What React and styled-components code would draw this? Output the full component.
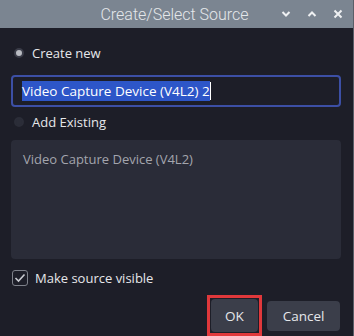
import React from 'react'
import styled, { createGlobalStyle } from 'styled-components'

const Global = createGlobalStyle`
  html, body {
    margin: 0;
    padding: 0;
    background: #1d1e28;
  }
  * { box-sizing: border-box; }
`

const App = () => {
  return (
    <>
      <Global />
      <Window>
        <TitleBar>
          <Title>Create/Select Source</Title>
          <Controls>
            <CtrlButton>
              <svg width="10" height="8" viewBox="0 0 10 8">
                <path d="M1.5 2 L5 5.5 L8.5 2" fill="none" stroke="#eef0f2" strokeWidth="2" />
              </svg>
            </CtrlButton>
            <CtrlButton>
              <svg width="10" height="8" viewBox="0 0 10 8">
                <path d="M1.5 6 L5 2.5 L8.5 6" fill="none" stroke="#eef0f2" strokeWidth="2" />
              </svg>
            </CtrlButton>
            <CtrlButton>
              <svg width="10" height="10" viewBox="0 0 10 10">
                <path d="M1.5 1.5 L8.5 8.5 M8.5 1.5 L1.5 8.5" fill="none" stroke="#eef0f2" strokeWidth="2" />
              </svg>
            </CtrlButton>
          </Controls>
        </TitleBar>
        <Body>
          <RadioRow>
            <Radio checked />
            <Label>Create new</Label>
          </RadioRow>
          <NameInput>
            <Selected>Video Capture Device (V4L2) 2</Selected>
            <Caret />
          </NameInput>
          <RadioRow>
            <Radio />
            <Label>Add Existing</Label>
          </RadioRow>
          <ListBox>
            <ListItem>Video Capture Device (V4L2)</ListItem>
          </ListBox>
          <CheckRow>
            <CheckBox>
              <svg width="12" height="10" viewBox="0 0 12 10">
                <path d="M1.5 5 L4.5 8 L10.5 1.5" fill="none" stroke="#c8cad0" strokeWidth="1.6" />
              </svg>
            </CheckBox>
            <Label>Make source visible</Label>
          </CheckRow>
          <ButtonRow>
            <Highlight>
              <Button>OK</Button>
            </Highlight>
            <Button wide>Cancel</Button>
          </ButtonRow>
        </Body>
      </Window>
    </>
  )
}

export default App

const Window = styled.div`
  width: 354px;
  height: 336px;
  background: #1d1e28;
  border-right: 1px solid #5a5e68;
  display: flex;
  flex-direction: column;
  overflow: hidden;
`

const TitleBar = styled.div`
  height: 28px;
  background: #7b8591;
  display: flex;
  align-items: center;
  position: relative;
`

const Title = styled.div`
  flex: 1;
  text-align: center;
  font-family: Roboto, "Liberation Sans", sans-serif;
  font-weight: 300;
  font-size: 16px;
  color: #e4e7ea;
  transform: translateX(-2px);
`

const Controls = styled.div`
  position: absolute;
  right: 5px;
  top: 0;
  height: 28px;
  display: flex;
  align-items: center;
  gap: 6px;
`

const CtrlButton = styled.div`
  width: 20px;
  height: 20px;
  display: flex;
  align-items: center;
  justify-content: center;
`

const Body = styled.div`
  flex: 1;
  padding: 14px 12px 0 11px;
  display: flex;
  flex-direction: column;
  font-family: "Open Sans", "Noto Sans", sans-serif;
  font-size: 13px;
  color: #e6e7ea;
`

const RadioRow = styled.div`
  display: flex;
  align-items: center;
  height: 22px;
  padding-left: 2px;
`

const Radio = styled.div`
  width: 10px;
  height: 10px;
  border-radius: 50%;
  background: ${p => (p.checked ? '#b9bbc2' : '#2b2d38')};
  border: 2px solid ${p => (p.checked ? '#3a3c48' : '#2b2d38')};
  margin-left: 1px;
  margin-right: 8px;
`

const Label = styled.span`
  color: #e6e7ea;
`

const NameInput = styled.div`
  margin-top: 11px;
  margin-bottom: 4px;
  width: 330px;
  height: 32px;
  border: 2px solid #3c4fa5;
  border-radius: 4px;
  background: #1d1e28;
  display: flex;
  align-items: center;
  padding-left: 9px;
`

const Selected = styled.span`
  background: #2d56c8;
  color: #ffffff;
  line-height: 20px;
  font-size: 13.5px;
`

const Caret = styled.span`
  width: 1px;
  height: 18px;
  background: #ffffff;
`

const ListBox = styled.div`
  margin-top: 7px;
  width: 330px;
  height: 119px;
  border-radius: 4px;
  background: #2a2c38;
  padding: 10px 12px;
`

const ListItem = styled.div`
  color: #a3a5ad;
  font-size: 13px;
`

const CheckRow = styled.div`
  margin-top: 10px;
  display: flex;
  align-items: center;
  height: 18px;
  padding-left: 1px;
`

const CheckBox = styled.div`
  width: 16px;
  height: 16px;
  border: 1px solid #7e818a;
  border-radius: 3px;
  display: flex;
  align-items: center;
  justify-content: center;
  margin-right: 7px;
`

const ButtonRow = styled.div`
  margin-top: 8px;
  display: flex;
  justify-content: flex-end;
  align-items: center;
  gap: 5px;
  padding-right: 1px;
`

const Highlight = styled.div`
  border: 3px solid #e0383b;
  padding: 1px;
  width: 55px;
  height: 41px;
  display: flex;
`

const Button = styled.div`
  width: ${p => (p.wide ? '73px' : '100%')};
  height: ${p => (p.wide ? '30px' : '100%')};
  background: #3b3e4a;
  border-radius: 4px;
  display: flex;
  align-items: center;
  justify-content: center;
  color: #e6e7ea;
  font-size: 13.5px;
`
